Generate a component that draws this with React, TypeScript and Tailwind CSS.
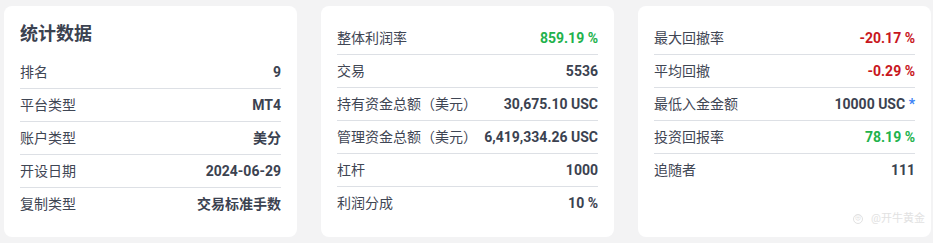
type Row = { label: string; value: string; tone?: 'green' | 'red'; star?: boolean };

const stats: Row[] = [
  { label: '排名', value: '9' },
  { label: '平台类型', value: 'MT4' },
  { label: '账户类型', value: '美分' },
  { label: '开设日期', value: '2024-06-29' },
  { label: '复制类型', value: '交易标准手数' },
];

const trading: Row[] = [
  { label: '整体利润率', value: '859.19 %', tone: 'green' },
  { label: '交易', value: '5536' },
  { label: '持有资金总额（美元）', value: '30,675.10 USC' },
  { label: '管理资金总额（美元）', value: '6,419,334.26 USC' },
  { label: '杠杆', value: '1000' },
  { label: '利润分成', value: '10 %' },
];

const risk: Row[] = [
  { label: '最大回撤率', value: '-20.17 %', tone: 'red' },
  { label: '平均回撤', value: '-0.29 %', tone: 'red' },
  { label: '最低入金金额', value: '10000 USC', star: true },
  { label: '投资回报率', value: '78.19 %', tone: 'green' },
  { label: '追随者', value: '111' },
];

function toneClass(tone?: string) {
  if (tone === 'green') return 'text-[#22b24c]';
  if (tone === 'red') return 'text-[#c8161d]';
  return 'text-[#3b4250]';
}

function StatRows({ rows }: { rows: Row[] }) {
  return (
    <div className="flex flex-col">
      {rows.map((r, i) => (
        <div
          key={r.label}
          className={`h-[33px] flex items-center justify-between ${i < rows.length - 1 ? 'border-b border-[#dde0e5]' : ''}`}
        >
          <span className="text-[14px] text-[#3f4654]">{r.label}</span>
          <span className={`text-[14px] font-bold ${toneClass(r.tone)}`}>
            {r.value}
            {r.star && <span className="text-[#3b82f6]"> *</span>}
          </span>
        </div>
      ))}
    </div>
  );
}

export default function App() {
  return (
    <div
      className="w-[933px] h-[243px] bg-[#f3f3f4] pl-1 pr-[2px] pt-[6px] pb-[6px] grid grid-cols-3 gap-6"
      style={{ fontFamily: 'Roboto, "Noto Sans CJK SC", sans-serif' }}
    >
      <div className="bg-white rounded-lg p-4">
        <h3 className="h-[34px] text-[18px] font-bold text-[#3b4250] leading-none pt-[3px]">统计数据</h3>
        <StatRows rows={stats} />
      </div>
      <div className="bg-white rounded-lg p-4">
        <StatRows rows={trading} />
      </div>
      <div className="bg-white rounded-lg p-4 relative">
        <StatRows rows={risk} />
        <div className="absolute right-[6px] bottom-[10px] flex items-center gap-1 text-[11px] text-[#e2e2e2]">
          <span className="w-[10px] h-[10px] rounded-full border border-[#e2e2e2] text-[7px] leading-none flex items-center justify-center">
            ⊕
          </span>
          <span className="ml-1">@开牛黄金</span>
        </div>
      </div>
    </div>
  );
}
